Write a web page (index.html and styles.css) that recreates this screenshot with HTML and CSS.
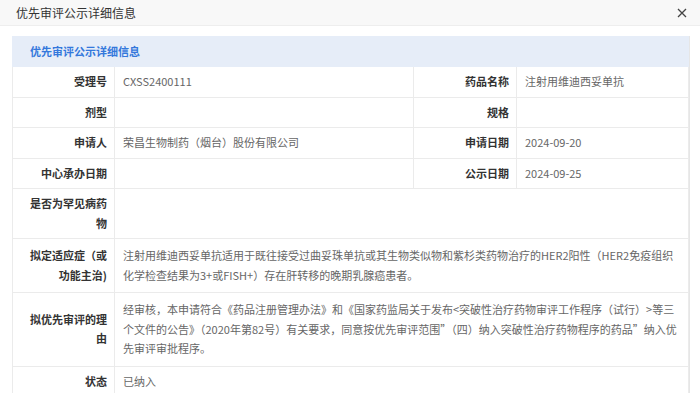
FILE: index.html
```html
<!DOCTYPE html>
<html lang="zh-CN">
<head>
    <meta charset="UTF-8">
    <meta name="viewport" content="width=device-width, initial-scale=1.0">
    <title>优先审评公示详细信息</title>
    <link rel="stylesheet" href="styles.css">
</head>
<body>
    <div class="dialog-title">
        <span>优先审评公示详细信息</span>
        <span class="close">
            <svg width="10" height="10" viewBox="0 0 10 10"><path d="M1 1L9 9M9 1L1 9" stroke="#444" stroke-width="1.3" fill="none"/></svg>
        </span>
    </div>
    <div class="dialog-body">
        <div class="panel">
            <div class="panel-head">优先审评公示详细信息</div>
            <table class="detail">
                <colgroup>
                    <col class="c-label">
                    <col class="c-value">
                    <col class="c-label2">
                    <col>
                </colgroup>
                <tr>
                    <th>受理号</th>
                    <td>CXSS2400111</td>
                    <th>药品名称</th>
                    <td>注射用维迪西妥单抗</td>
                </tr>
                <tr>
                    <th>剂型</th>
                    <td></td>
                    <th>规格</th>
                    <td></td>
                </tr>
                <tr>
                    <th>申请人</th>
                    <td>荣昌生物制药（烟台）股份有限公司</td>
                    <th>申请日期</th>
                    <td>2024-09-20</td>
                </tr>
                <tr>
                    <th>中心承办日期</th>
                    <td></td>
                    <th>公示日期</th>
                    <td>2024-09-25</td>
                </tr>
                <tr>
                    <th>是否为罕见病药物</th>
                    <td colspan="3"></td>
                </tr>
                <tr>
                    <th>拟定适应症（或功能主治)</th>
                    <td colspan="3" class="long">注射用维迪西妥单抗适用于既往接受过曲妥珠单抗或其生物类似物和紫杉类药物治疗的HER2阳性（HER2免疫组织化学检查结果为3+或FISH+）存在肝转移的晚期乳腺癌患者。</td>
                </tr>
                <tr>
                    <th>拟优先审评的理由</th>
                    <td colspan="3" class="long">经审核，本申请符合《药品注册管理办法》和《国家药监局关于发布&lt;突破性治疗药物审评工作程序（试行）&gt;等三个文件的公告》（2020年第82号）有关要求，同意按优先审评范围”（四）纳入突破性治疗药物程序的药品”纳入优先审评审批程序。</td>
                </tr>
                <tr>
                    <th>状态</th>
                    <td colspan="3">已纳入</td>
                </tr>
            </table>
        </div>
    </div>
</body>
</html>
```

FILE: styles.css
```css
body {
    margin: 0;
    font-family: "Noto Sans CJK SC", "Liberation Sans", sans-serif;
    font-size: 12px;
    color: #333;
    background: #fff;
    overflow: hidden;
}

.dialog-title {
    height: 25px;
    display: flex;
    align-items: center;
    justify-content: space-between;
    padding: 0 13px 0 16px;
    background-color: #f8f8f8;
    border-bottom: 1px solid #eee;
    color: #333;
}

.close {
    display: flex;
    align-items: center;
}

.dialog-body {
    padding: 10px 10px 0 12px;
}

.panel {
    border: 1px solid #e6e6e6;
    border-top: none;
    border-left: none;
}

.panel-head {
    height: 31px;
    line-height: 31px;
    padding-left: 18px;
    background-color: #e6edf8;
    color: #3478dc;
    font-size: 11px;
    font-weight: bold;
}

.detail {
    width: 100%;
    border-collapse: collapse;
    table-layout: fixed;
    font-size: 11px;
}

.c-label {
    width: 102px;
}

.c-value {
    width: 299px;
}

.c-label2 {
    width: 103px;
}

.detail th,
.detail td {
    border: 1px solid #ebebeb;
    padding: 5px 7px;
    line-height: 19.5px;
    vertical-align: middle;
}

.detail tr:first-child th,
.detail tr:first-child td {
    border-top: none;
}

.detail th {
    text-align: right;
    font-weight: bold;
    color: #333;
}

.detail td {
    text-align: left;
    color: #666;
    padding-left: 8px;
}

.detail td.long {
    padding-top: 7px;
    padding-bottom: 7px;
}
```
